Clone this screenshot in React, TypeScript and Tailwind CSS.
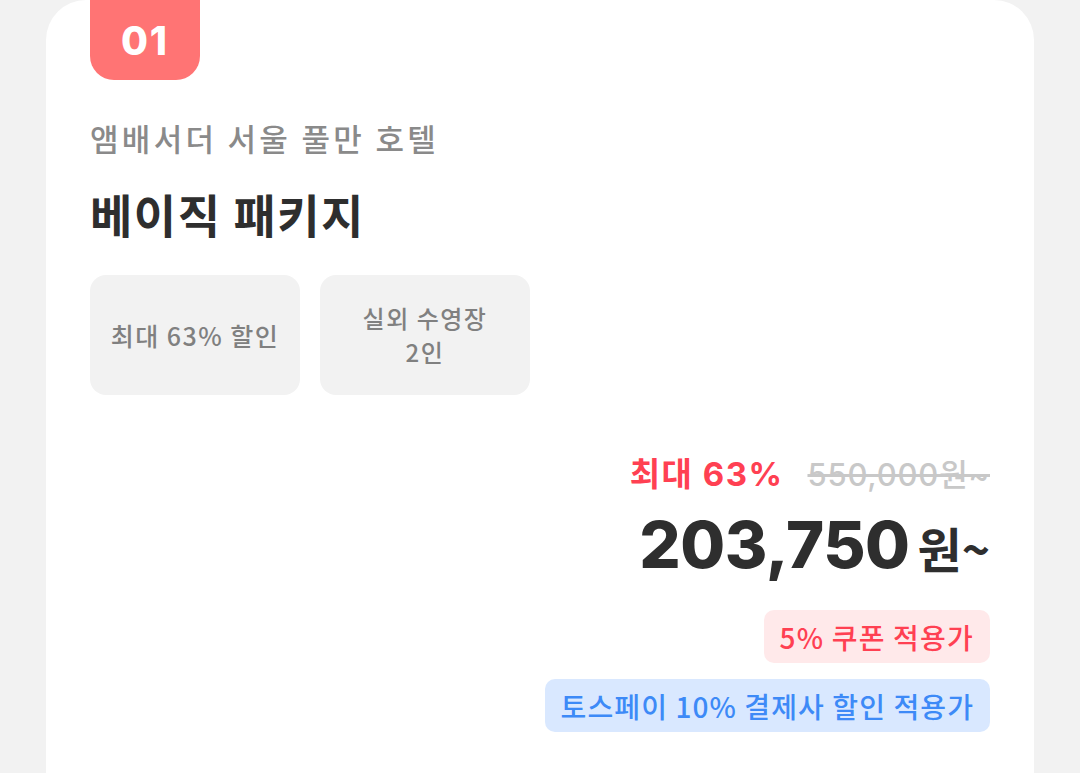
import React from "react";

export default function App() {
  const ko = { fontFamily: '"Noto Sans CJK KR", "Noto Sans", sans-serif' };
  const num = { fontFamily: 'Inter, "Noto Sans CJK KR", sans-serif' };
  return (
    <div className="w-[1080px] h-[773px] bg-[#f2f2f2] overflow-hidden" style={ko}>
      <div className="ml-[46px] w-[988px] h-[900px] bg-white rounded-t-[40px] px-[44px]">
        <div className="w-[110px] h-[80px] bg-[#ff7474] rounded-b-[24px] flex items-center justify-center">
          <span className="text-white text-[39px] font-extrabold leading-none tracking-[2px]" style={{ fontFamily: 'Inter, sans-serif' }}>01</span>
        </div>
        <div className="mt-[38px] text-[31px] leading-[40px] text-[#8a8a8a] font-medium tracking-[3.3px]">앰배서더 서울 풀만 호텔</div>
        <div className="mt-[29px] text-[46px] leading-[52px] text-[#2e2e2e] font-bold tracking-[1.5px]">베이직 패키지</div>
        <div className="mt-[36px] flex gap-[20px]">
          <div className="w-[210px] h-[120px] rounded-[16px] bg-[#f2f2f2] flex items-center justify-center text-center text-[25px] leading-[34px] text-[#808080] font-medium tracking-[1.5px]">
            최대 63% 할인
          </div>
          <div className="w-[210px] h-[120px] rounded-[16px] bg-[#f2f2f2] flex items-center justify-center text-center text-[24px] leading-[34px] text-[#808080] font-medium tracking-[1.5px]">
            실외 수영장<br />2인
          </div>
        </div>
        <div className="mt-[60px] flex justify-end items-center gap-[24px] h-[40px]">
          <span className="text-[33px] font-bold text-[#ff4052] tracking-[1.5px]" style={num}>최대 63%</span>
          <span className="text-[31px] font-medium text-[#c8c8c8] line-through tracking-[0.8px]" style={num}>550,000원~</span>
        </div>
        <div className="mt-[12px] flex justify-end items-baseline h-[76px]">
          <span className="text-[65px] leading-[76px] font-extrabold text-[#2e2e2e] tracking-[-0.5px]" style={num}>203,750</span>
          <span className="ml-[8px] text-[48px] font-bold text-[#2e2e2e]">원~</span>
        </div>
        <div className="mt-[27px] flex flex-col items-end gap-[16px]">
          <div className="h-[53px] px-[16px] rounded-[10px] bg-[#ffe9ea] text-[#ff4052] text-[28px] font-medium tracking-[1.2px] flex items-center">5% 쿠폰 적용가</div>
          <div className="h-[53px] px-[16px] rounded-[10px] bg-[#d9e8ff] text-[#3d8af7] text-[28px] font-medium tracking-[1.1px] flex items-center">토스페이 10% 결제사 할인 적용가</div>
        </div>
      </div>
    </div>
  );
}
